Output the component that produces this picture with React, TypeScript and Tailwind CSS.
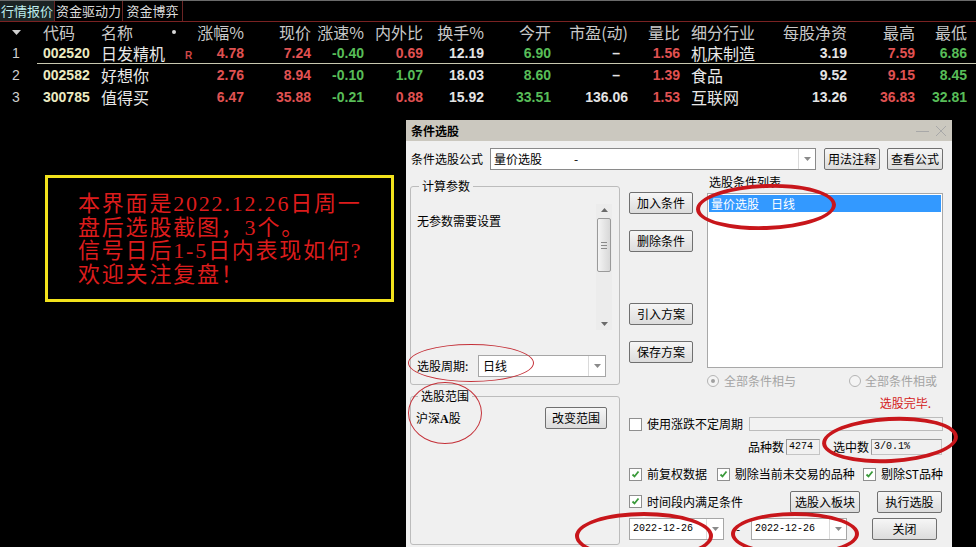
import React from "react"

const RED = "text-[#e05252]"
const GRN = "text-[#58bd58]"
const WHT = "text-[#e4e4e4]"

type Cell = { v: string; c: string }

const rows: {
  i: number
  code: string
  name: string
  r?: boolean
  cells: Cell[]
  industry: string
  tail: Cell[]
}[] = [
  {
    i: 1,
    code: "002520",
    name: "日发精机",
    r: true,
    cells: [
      { v: "4.78", c: RED },
      { v: "7.24", c: RED },
      { v: "-0.40", c: GRN },
      { v: "0.69", c: RED },
      { v: "12.19", c: WHT },
      { v: "6.90", c: GRN },
      { v: "–", c: WHT },
      { v: "1.56", c: RED },
    ],
    industry: "机床制造",
    tail: [
      { v: "3.19", c: WHT },
      { v: "7.59", c: RED },
      { v: "6.86", c: GRN },
    ],
  },
  {
    i: 2,
    code: "002582",
    name: "好想你",
    cells: [
      { v: "2.76", c: RED },
      { v: "8.94", c: RED },
      { v: "-0.10", c: GRN },
      { v: "1.07", c: GRN },
      { v: "18.03", c: WHT },
      { v: "8.60", c: GRN },
      { v: "–", c: WHT },
      { v: "1.39", c: RED },
    ],
    industry: "食品",
    tail: [
      { v: "9.52", c: WHT },
      { v: "9.15", c: RED },
      { v: "8.45", c: GRN },
    ],
  },
  {
    i: 3,
    code: "300785",
    name: "值得买",
    cells: [
      { v: "6.47", c: RED },
      { v: "35.88", c: RED },
      { v: "-0.21", c: GRN },
      { v: "0.88", c: RED },
      { v: "15.92", c: WHT },
      { v: "33.51", c: GRN },
      { v: "136.06", c: WHT },
      { v: "1.53", c: RED },
    ],
    industry: "互联网",
    tail: [
      { v: "13.26", c: WHT },
      { v: "36.83", c: RED },
      { v: "32.81", c: GRN },
    ],
  },
]

// widths of the numeric columns between 名称 and 细分行业
const midCols = [
  { h: "涨幅%", w: "w-[50px]" },
  { h: "现价", w: "w-[67px]" },
  { h: "涨速%", w: "w-[53px]" },
  { h: "内外比", w: "w-[59px]" },
  { h: "换手%", w: "w-[61px]" },
  { h: "今开", w: "w-[67px]" },
  { h: "市盈(动)", w: "w-[77px]" },
  { h: "量比", w: "w-[52px]" },
]
const tailCols = [
  { h: "每股净资", w: "w-[78px]" },
  { h: "最高", w: "w-[68px]" },
  { h: "最低", w: "w-[52px]" },
]

const cjk = "font-['Noto_Sans_CJK_SC',sans-serif]"
const num = "font-['Liberation_Sans',Arial,sans-serif] font-bold text-[14px]"

function WinButton({ children, w }: { children: React.ReactNode; w: string }) {
  return (
    <div
      className={`${w} flex h-[22px] items-center justify-center whitespace-nowrap rounded-[2px] border border-[#707070] bg-gradient-to-b from-[#f6f6f6] to-[#dcdcdc] text-[12px] text-black`}
    >
      {children}
    </div>
  )
}

function Arrow() {
  return (
    <div className="flex w-[17px] items-center justify-center self-stretch border-l border-[#dadada]">
      <svg width="7" height="4" viewBox="0 0 7 4">
        <path d="M0 0h7L3.5 4z" fill="#8a8a8a" />
      </svg>
    </div>
  )
}

function Check({ on = true }: { on?: boolean }) {
  return (
    <div className="flex h-[13px] w-[13px] shrink-0 items-center justify-center border border-[#8f8f8f] bg-white">
      {on && (
        <svg width="9" height="9" viewBox="0 0 9 9">
          <path d="M1.5 4.5l2 2 4-5" stroke="#3a9a3a" strokeWidth="1.8" fill="none" />
        </svg>
      )}
    </div>
  )
}

function Radio({ on }: { on?: boolean }) {
  return (
    <div className="flex h-[12px] w-[12px] items-center justify-center rounded-full border border-[#b4b4b4] bg-[#f4f4f4]">
      {on && <div className="h-[4px] w-[4px] rounded-full bg-[#a0a0a0]" />}
    </div>
  )
}

function Ellipse({ className }: { className: string }) {
  return <div className={`pointer-events-none absolute rounded-[50%] ${className}`} />
}

function Quotes() {
  return (
    <div>
      {/* tabs */}
      <div className={`flex h-[22px] border-t border-b border-t-[#6a6a6a] border-b-[#7a2222] ${cjk} text-[13px] leading-[20px]`}>
        <div className="flex w-[55px] items-center pl-[1px] bg-[#1c2424] text-[#bfeeee] border-r border-[#6a2424]">行情报价</div>
        <div className="flex w-[68px] items-center justify-center text-[#dcdcdc] border-r border-[#6a2424]">资金驱动力</div>
        <div className="flex w-[60px] items-center justify-center text-[#dcdcdc] border-r border-[#6a2424]">资金博弈</div>
      </div>
      {/* header */}
      <div className={`flex h-[20px] items-center ${cjk} text-[16px] leading-[20px] text-[#c8c8c8]`}>
        <div className="w-[37px] pl-[12px]">
          <svg width="9" height="5" viewBox="0 0 9 5">
            <path d="M0 0h9L4.5 5z" fill="#d0d0d0" />
          </svg>
        </div>
        <div className="w-[61px] pl-[6px]">代码</div>
        <div className="w-[72px] pl-[3px]">名称</div>
        <div className="flex w-[25px] items-center pl-[2px]">
          <div className="h-[4px] w-[4px] rounded-full bg-[#d8d8d8]" />
        </div>
        {midCols.map((c) => (
          <div key={c.h} className={`${c.w} pr-[1px] text-right whitespace-nowrap`}>
            {c.h}
          </div>
        ))}
        <div className="w-[89px] pl-[10px]">细分行业</div>
        {tailCols.map((c) => (
          <div key={c.h} className={`${c.w} pr-[1px] text-right`}>
            {c.h}
          </div>
        ))}
      </div>
      {/* rows */}
      {rows.map((r) => (
        <div key={r.code} className="flex h-[22px] items-center leading-[20px]">
          <div className={`w-[37px] pl-[12px] ${num} font-normal text-[#cfcfcf]`}>{r.i}</div>
          <div className={`flex h-full flex-1 items-center ${r.i === 1 ? "border-b border-[#c8c8b0]" : ""}`}>
            <div className={`w-[61px] pl-[6px] ${num} text-[#ecebc2]`}>{r.code}</div>
            <div className={`w-[72px] pl-[3px] ${cjk} text-[16px] text-[#e8e8e8]`}>{r.name}</div>
            <div className="w-[25px] pl-[15px] pt-[6px] font-['Liberation_Sans',sans-serif] text-[10px] font-bold leading-[12px] text-[#d04848]">
              {r.r ? "R" : ""}
            </div>
            {r.cells.map((c, k) => (
              <div
                key={k}
                className={`${midCols[k].w} ${c.v === "–" ? "pr-[9px]" : "pr-[1px]"} text-right ${num} ${c.c}`}
              >
                {c.v}
              </div>
            ))}
            <div className={`w-[89px] pl-[10px] ${cjk} text-[16px] text-[#e8e8e8]`}>{r.industry}</div>
            {r.tail.map((c, k) => (
              <div key={k} className={`${tailCols[k].w} pr-[1px] text-right ${num} ${c.c}`}>
                {c.v}
              </div>
            ))}
          </div>
        </div>
      ))}
    </div>
  )
}

function Dialog() {
  return (
    <div className={`ml-[12px] mt-[12px] h-[440px] w-[546px] bg-[#f0f0f0] ${cjk} text-[12px] leading-[14px] text-black`}>
      {/* title */}
      <div className="flex h-[21px] items-center justify-between bg-[#cbc8bf] pl-[5px] pr-[5px]">
        <span className="font-bold">条件选股</span>
        <div className="flex items-center gap-[6px] text-[#a8a8a8]">
          <div className="mt-[1px] h-[1px] w-[13px] bg-[#a8a8a8]" />
          <svg width="12" height="12" viewBox="0 0 12 12">
            <path d="M1 1l10 10M11 1L1 11" stroke="#a8a8a8" strokeWidth="1" />
          </svg>
        </div>
      </div>

      <div className="pl-[4px]">
        {/* formula row */}
        <div className="mt-[7px] flex h-[22px] items-center">
          <div className="ml-[1px] w-[79px]">条件选股公式</div>
          <div className="flex h-[22px] w-[326px] items-center border border-[#8a8a8a] bg-white">
            <span className="ml-[3px] w-[80px]">量价选股</span>
            <span className="flex-1">-</span>
            <Arrow />
          </div>
          <div className="ml-[8px]">
            <WinButton w="w-[56px]">用法注释</WinButton>
          </div>
          <div className="ml-[7px]">
            <WinButton w="w-[56px]">查看公式</WinButton>
          </div>
        </div>

        <div className="mt-[5px] flex">
          {/* left column */}
          <div className="w-[210px]">
            <div className="relative mt-[11px] flex h-[199px] flex-col rounded-[3px] border border-[#bcbcbc]">
              <span className="absolute -top-[8px] left-[8px] bg-[#f0f0f0] px-[3px]">计算参数</span>
              <div className="mt-[17px] flex">
                <div className="mt-[10px] flex-1 pl-[6px]">无参数需要设置</div>
                <div className="mr-[7px] flex h-[126px] w-[16px] flex-col items-center justify-between bg-[#ececec] py-[4px]">
                  <svg width="7" height="4" viewBox="0 0 7 4">
                    <path d="M3.5 0L7 4H0z" fill="#6a6a6a" />
                  </svg>
                  <div className="mb-auto mt-[6px] flex h-[54px] w-[14px] flex-col items-center justify-center gap-[2px] rounded-[2px] border border-[#9a9a9a] bg-gradient-to-r from-[#f4f4f4] to-[#d8d8d8]">
                    <div className="h-[1px] w-[6px] bg-[#8a8a8a]" />
                    <div className="h-[1px] w-[6px] bg-[#8a8a8a]" />
                    <div className="h-[1px] w-[6px] bg-[#8a8a8a]" />
                  </div>
                  <svg width="7" height="4" viewBox="0 0 7 4">
                    <path d="M0 0h7L3.5 4z" fill="#6a6a6a" />
                  </svg>
                </div>
              </div>
              <div className="mt-[25px] flex items-center pl-[6px]">
                <span className="w-[61px]">选股周期:</span>
                <div className="flex h-[22px] w-[128px] items-center border border-[#a6a6a6] bg-white">
                  <span className="ml-[4px] flex-1">日线</span>
                  <Arrow />
                </div>
              </div>
            </div>
            <div className="relative mt-[11px] h-[149px] rounded-[3px] border border-[#bcbcbc]">
              <span className="absolute -top-[8px] left-[7px] bg-[#f0f0f0] px-[3px]">选股范围</span>
              <div className="mt-[10px] flex items-center justify-between pl-[5px] pr-[12px]">
                <span>
                  沪深<b className="font-['Liberation_Serif',serif]">A</b>股
                </span>
                <WinButton w="w-[62px]">改变范围</WinButton>
              </div>
            </div>
          </div>

          {/* right side */}
          <div className="ml-[9px] w-[314px]">
            <div className="flex">
              <div className="w-[64px]">
                <div className="mt-[17px]">
                  <WinButton w="w-[64px]">加入条件</WinButton>
                </div>
                <div className="mt-[16px]">
                  <WinButton w="w-[64px]">删除条件</WinButton>
                </div>
                <div className="mt-[51px]">
                  <WinButton w="w-[64px]">引入方案</WinButton>
                </div>
                <div className="mt-[16px]">
                  <WinButton w="w-[64px]">保存方案</WinButton>
                </div>
              </div>
              <div className="ml-[14px] w-[236px]">
                <div className="ml-[2px] h-[14px]">选股条件列表</div>
                <div className="mt-[4px] h-[175px] border border-[#a8a8a8] bg-white p-[1px]">
                  <div className="flex h-[17px] items-center bg-[#3399ff] pl-[2px] text-white">
                    量价选股<span className="ml-[12px]">日线</span>
                  </div>
                </div>
                <div className="mt-[6px] flex h-[14px] items-center text-[#a4a4a4]">
                  <Radio on />
                  <span className="ml-[5px]">全部条件相与</span>
                  <div className="ml-[53px]">
                    <Radio />
                  </div>
                  <span className="ml-[4px]">全部条件相或</span>
                </div>
                <div className="mt-[8px] h-[14px] pr-[12px] text-right text-[#d42020]">选股完毕.</div>
              </div>
            </div>

            {/* option rows */}
            <div className="mt-[7px] flex h-[14px] items-center">
              <Check on={false} />
              <span className="ml-[5px] w-[102px]">使用涨跌不定周期</span>
              <div className="h-[14px] w-[194px] border border-[#bcbcbc] bg-[#f2f2f2]" />
            </div>
            <div className="mt-[8px] flex h-[16px] items-center">
              <span className="ml-[119px] w-[38px]">品种数</span>
              <div className="flex h-[16px] w-[34px] items-center border border-[#c4c4c4] border-l-[#9a9a9a] border-t-[#9a9a9a] pl-[2px] font-['Liberation_Mono',monospace] text-[10px]">
                4274
              </div>
              <span className="ml-[13px] w-[38px]">选中数</span>
              <div className="flex h-[16px] w-[71px] items-center border border-[#c4c4c4] border-l-[#9a9a9a] border-t-[#9a9a9a] pl-[2px] font-['Liberation_Mono',monospace] text-[10px]">
                3/0.1%
              </div>
            </div>
            <div className="mt-[12px] flex h-[14px] items-center whitespace-nowrap">
              <Check />
              <span className="ml-[5px] w-[70px]">前复权数据</span>
              <Check />
              <span className="ml-[5px] w-[129px]">剔除当前未交易的品种</span>
              <Check />
              <span className="ml-[5px]">剔除ST品种</span>
            </div>
            <div className="mt-[9px] flex h-[23px] items-center">
              <Check />
              <span className="ml-[5px] w-[143px]">时间段内满足条件</span>
              <WinButton w="w-[70px]">选股入板块</WinButton>
              <div className="ml-[17px]">
                <WinButton w="w-[65px]">执行选股</WinButton>
              </div>
            </div>
            <div className="mt-[4px] flex h-[23px] items-center">
              <div className="flex h-[22px] w-[95px] items-center border border-[#a6a6a6] bg-white">
                <span className="ml-[3px] flex-1 font-['Liberation_Mono',monospace] text-[10px]">2022-12-26</span>
                <Arrow />
              </div>
              <span className="ml-[12px] w-[15px]">-</span>
              <div className="flex h-[22px] w-[96px] items-center border border-[#a6a6a6] bg-white">
                <span className="ml-[3px] flex-1 font-['Liberation_Mono',monospace] text-[10px]">2022-12-26</span>
                <Arrow />
              </div>
              <div className="ml-[25px]">
                <WinButton w="w-[65px]">关闭</WinButton>
              </div>
            </div>
          </div>
        </div>
      </div>
    </div>
  )
}

export default function App() {
  return (
    <div className="relative h-[547px] w-[976px] overflow-hidden bg-black">
      <Quotes />
      <div className="flex items-start">
        <div className="ml-[45px] mt-[67px] h-[127px] w-[349px] border-[3px] border-[#f2e21c] pl-[30px] pt-[14px]">
          <div className="font-['Liberation_Serif','Noto_Sans_CJK_SC',serif] text-[22px] leading-[23.7px] tracking-[1.8px] text-[#dc1c1c]">
            <div>本界面是2022.12.26日周一</div>
            <div>盘后选股截图，3个。</div>
            <div>信号日后1-5日内表现如何?</div>
            <div>欢迎关注复盘！</div>
          </div>
        </div>
        <Dialog />
      </div>

      {/* red marker circles drawn over the screenshot */}
      <Ellipse className="left-[696px] top-[184px] h-[46px] w-[140px] -rotate-2 border-[4px] border-[#c8161b]" />
      <Ellipse className="left-[408px] top-[344px] h-[38px] w-[126px] border border-[#c43038]" />
      <Ellipse className="left-[408px] top-[382px] h-[62px] w-[74px] border border-[#c43038]" />
      <Ellipse className="left-[822px] top-[417px] h-[46px] w-[136px] -rotate-3 border-[4px] border-[#c8161b]" />
      <Ellipse className="left-[575px] top-[512px] h-[48px] w-[138px] border-[4px] border-[#c8161b]" />
      <Ellipse className="left-[731px] top-[512px] h-[44px] w-[128px] border-[4px] border-[#c8161b]" />
    </div>
  )
}
